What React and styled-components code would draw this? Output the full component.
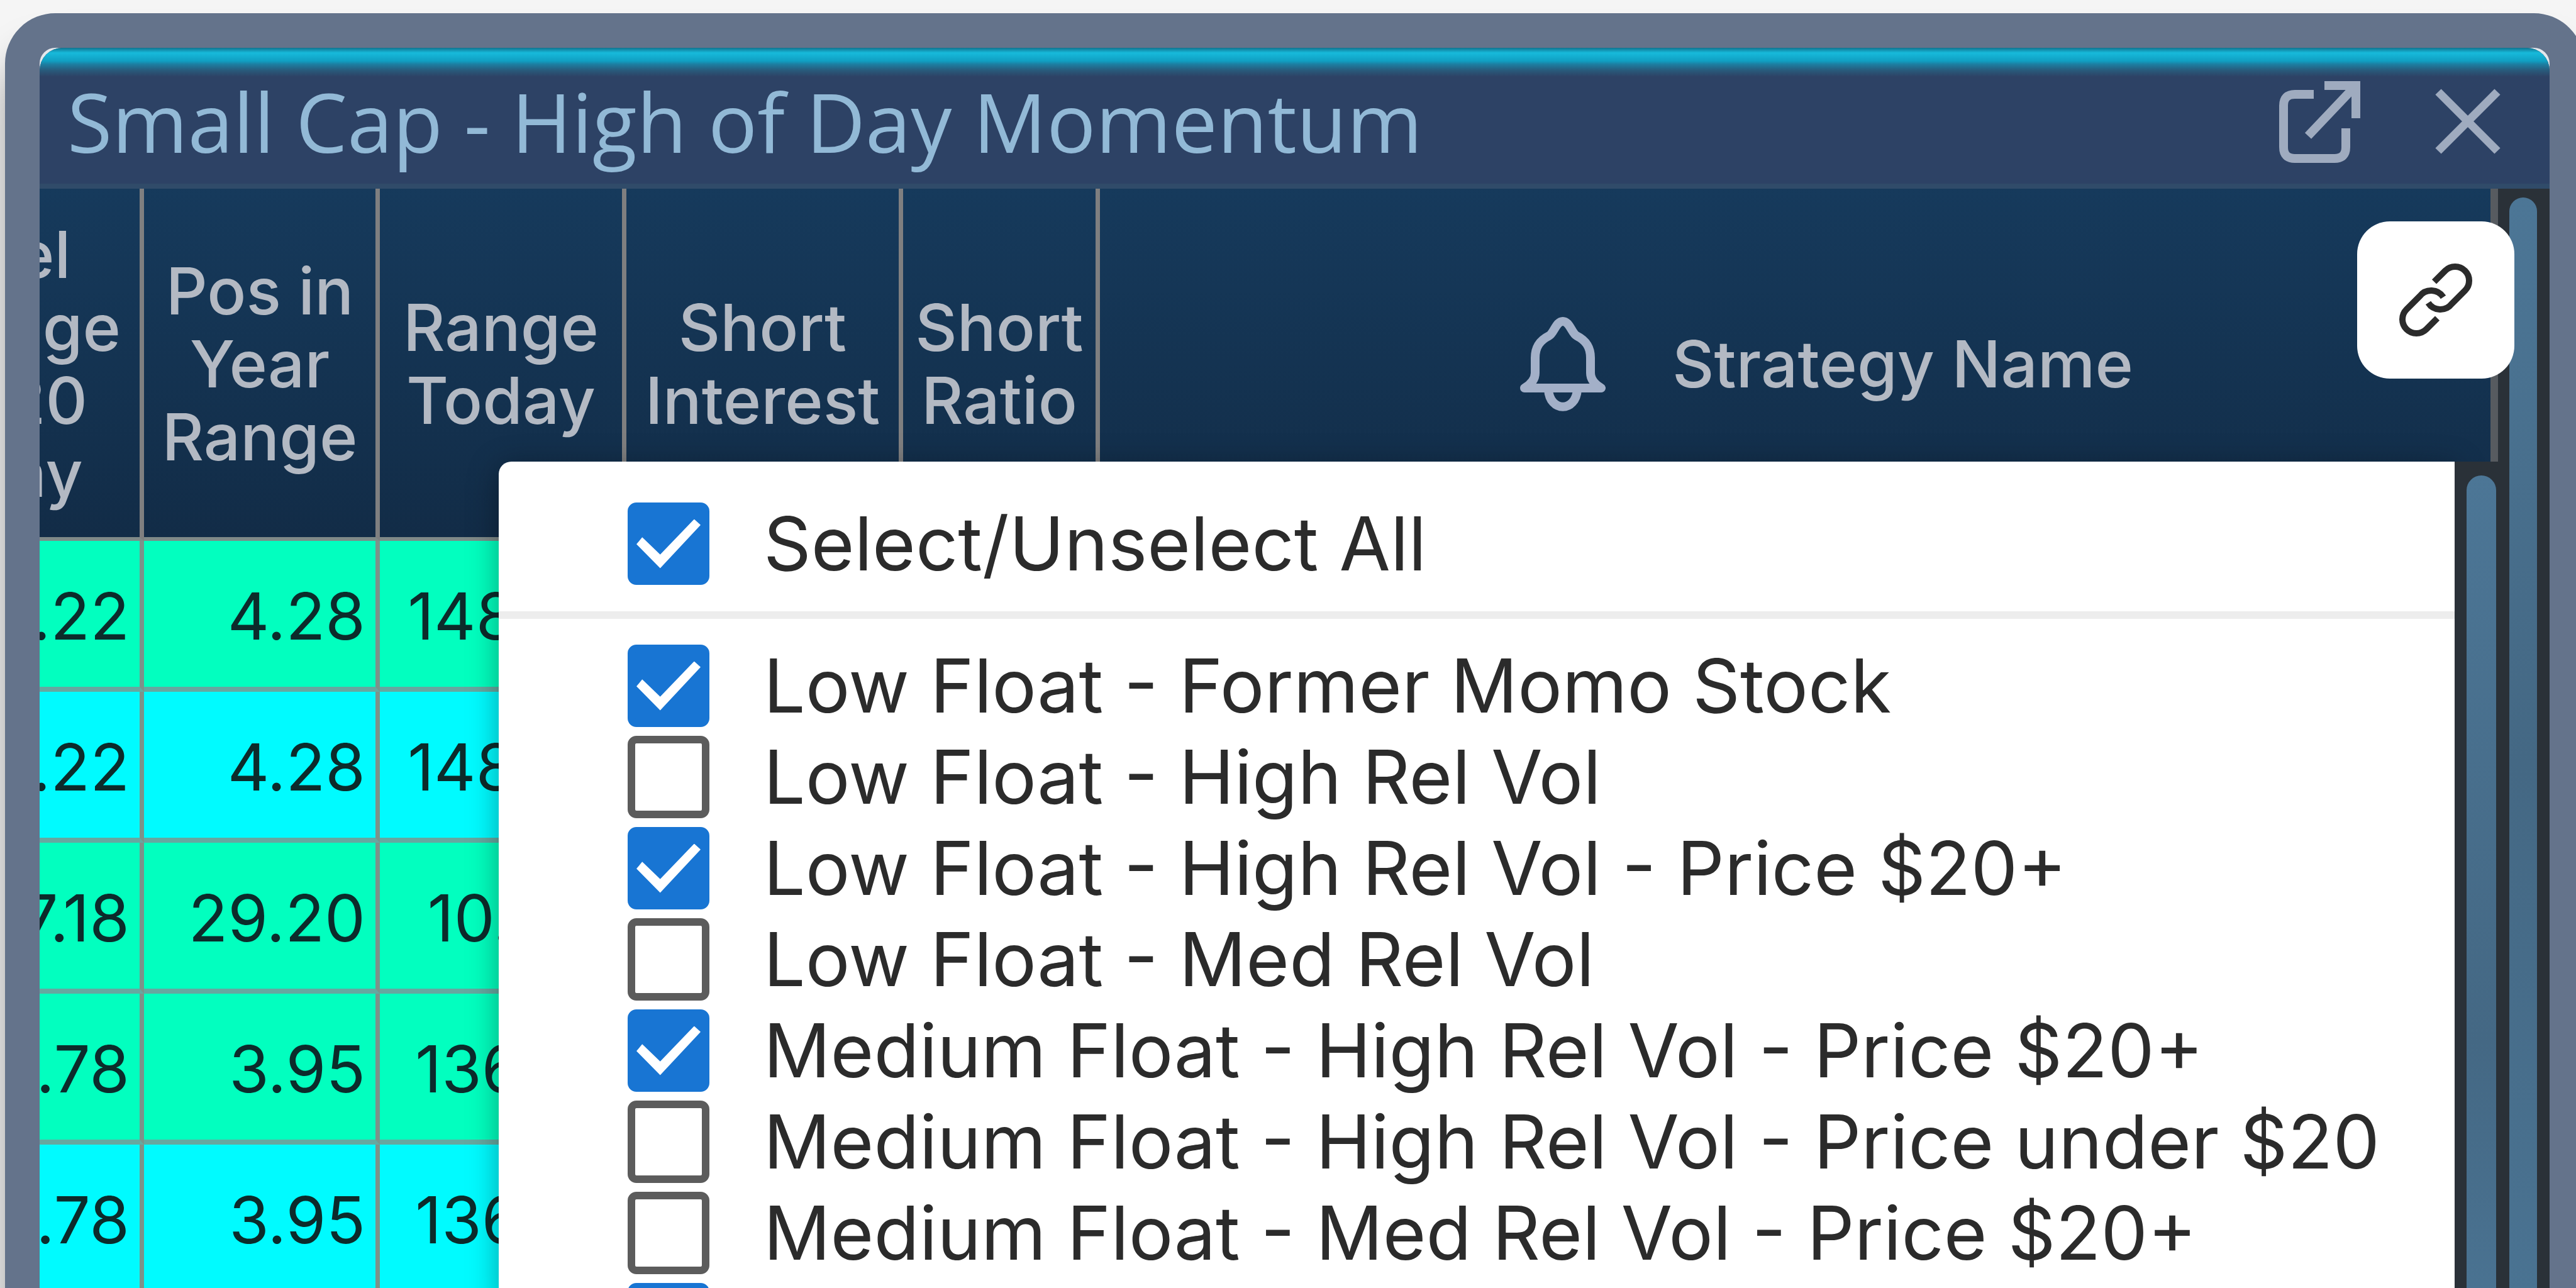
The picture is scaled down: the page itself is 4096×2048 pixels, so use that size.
import React, { useState } from "react";
import styled, { createGlobalStyle } from "styled-components";

const GlobalStyle = createGlobalStyle`
  * { box-sizing: border-box; }
  body {
    margin: 0;
    background: #f5f5f5;
    overflow: hidden;
  }
`;
const Frame = styled.div`
  height: 100vh;
  padding: 21px 0 0 8px;
  margin-right: -13px;
  display: flex;
  overflow: hidden;
`;
const Panel = styled.div`
  flex: 1;
  min-width: 0;
  height: calc(100% + 80px);
  border: 55px solid #64738b;
  border-radius: 80px;
  background: #e4e8ec;
  box-shadow: 0 60px 60px rgba(0, 0, 0, 0.35);
`;
const Widget = styled.section`
  position: relative;
  height: 100%;
  display: flex;
  flex-direction: column;
  border-radius: 36px 36px 0 0;
  overflow: hidden;
  background: #2d4265;
  font-family: Inter, "Liberation Sans", sans-serif;
`;
const TitleBar = styled.header`
  height: 224px;
  flex: none;
  display: flex;
  align-items: center;
  gap: 116px;
  padding: 18px 78px 0 44px;
  color: #9fabbf;
  background: linear-gradient(#11738f 0, #17badb 8px, #109fc2 21px, #1c7fa2 26px, #285a7b 36px, #2d4265 46px);
  border-bottom: 8px solid #304b69;
`;
const Title = styled.h1`
  flex: 1;
  margin: 0;
  font: 400 130px/160px "Open Sans", sans-serif;
  color: #92b9d6;
`;
const IconButton = styled.button`
  display: flex;
  padding: 0;
  border: 0;
  background: none;
  color: inherit;
`;
const Body = styled.div`
  flex: 1;
  min-height: 0;
  display: flex;
`;
const Scroller = styled.div`
  flex: 1;
  min-width: 0;
  overflow: hidden;
`;
const Table = styled.table`
  table-layout: fixed;
  width: calc(100% + 212px);
  margin-left: -212px;
  border-collapse: separate;
  border-spacing: 0;
`;
const Th = styled.th`
  height: 560px;
  padding: 4px 0 0;
  border-right: 7px solid #7f7f80;
  border-bottom: 6px solid #7f8a88;
  background: linear-gradient(#163a5c, #122c47);
  color: #b3b9c3;
  font-size: 103px;
  font-weight: 500;
  line-height: 116px;
  &:last-child {
    border-right: 12px solid #575b60;
  }
`;
const Td = styled.td`
  height: 240px;
  padding: 6px 16px 0;
  border-right: 7px solid #7b938a;
  border-bottom: 8px solid #66a8a0;
  background: ${p => (p.$tone === "green" ? "#02ffbf" : "#00fbff")};
  color: #0c2b2b;
  font-size: 103px;
  text-align: right;
`;
const Strategy = styled.div`
  display: flex;
  align-items: center;
  justify-content: center;
  gap: 106px;
  padding-left: 100px;
`;
const Track = styled.div`
  flex: none;
  width: 82px;
  padding: 14px 20px 0 18px;
  background: #2a3138;
`;
const Thumb = styled.div`
  height: 100%;
  border-radius: 24px 24px 0 0;
  background: linear-gradient(#4c7696, #446884 900px, #4a7392);
`;
const LinkButton = styled.button`
  position: absolute;
  top: 276px;
  right: 56px;
  width: 250px;
  height: 250px;
  display: flex;
  align-items: center;
  justify-content: center;
  border: 0;
  border-radius: 52px;
  background: #fff;
  color: #2b2b2b;
`;
const Popover = styled.div`
  position: absolute;
  top: 658px;
  right: 65px;
  bottom: 0;
  left: 730px;
  display: flex;
  border-radius: 20px 0 0 0;
  overflow: hidden;
`;
const PopoverShadow = styled(Popover)`
  overflow: visible;
  right: 150px;
  box-shadow: 0 10px 50px rgba(0, 0, 0, 0.35);
`;
const Menu = styled.div`
  flex: 1;
  background: #fff;
`;
const SelectAll = styled.div`
  padding: 58px 0 35px;
  border-bottom: 12px solid #ededed;
  margin-bottom: 34px;
`;
const Option = styled.label`
  display: flex;
  align-items: center;
  height: 145px;
  gap: 86px;
  padding-left: 205px;
  font-size: 118px;
  line-height: 145px;
  color: #2b2b2b;
  white-space: nowrap;
`;
const Check = styled.input`
  appearance: none;
  flex: none;
  width: 130px;
  height: 131px;
  margin: 0;
  border: 12px solid #5c5c5c;
  border-radius: 14px;
  background: #fff;
  display: grid;
  place-content: center;
  &:checked {
    border-color: #1875d3;
    background: #1875d3;
  }
  &:checked::before {
    content: "";
    width: 102px;
    height: 78px;
    background: #fff;
    clip-path: polygon(0 51%, 9% 37%, 37% 72%, 90% 0, 100% 12%, 37% 100%);
  }
`;
const MenuTrack = styled(Track)`
  width: 86px;
  padding: 22px 20px 0 19px;
`;

const ROWS = [
  { tone: "green", cells: [".22", "4.28", "148.86"] },
  { tone: "cyan", cells: [".22", "4.28", "148.86"] },
  { tone: "green", cells: ["7.18", "29.20", "10.135"] },
  { tone: "green", cells: [".78", "3.95", "136.77"] },
  { tone: "cyan", cells: [".78", "3.95", "136.77"] }
];

const STRATEGIES = [
  { name: "Low Float - Former Momo Stock", on: true },
  { name: "Low Float - High Rel Vol", on: false },
  { name: "Low Float - High Rel Vol - Price $20+", on: true },
  { name: "Low Float - Med Rel Vol", on: false },
  { name: "Medium Float - High Rel Vol - Price $20+", on: true },
  { name: "Medium Float - High Rel Vol - Price under $20", on: false },
  { name: "Medium Float - Med Rel Vol - Price $20+", on: false },
  { name: "", on: true }
];

const ExternalIcon = () => (
  <svg width="134" height="134" viewBox="0 0 134 134" fill="none" stroke="currentColor" strokeWidth="14">
    <path d="M57 24H27Q9 24 9 42V108Q9 126 27 126H90Q108 126 108 108V78" />
    <path d="M74 10H124V62M122 12L48 90" />
  </svg>
);
const CloseIcon = () => (
  <svg width="104" height="106" viewBox="0 0 104 106" fill="none" stroke="currentColor" strokeWidth="13">
    <path d="M5 6L99 100M99 6L5 100" />
  </svg>
);
const BellIcon = () => (
  <svg width="136" height="152" viewBox="0 0 136 152" fill="none" stroke="#a3b0c8" strokeWidth="14" strokeLinejoin="round">
    <path d="M7 114Q24 104 24 90V66C24 48 32 38 46 31C54 27 57 8 68 8C79 8 82 27 90 31C104 38 112 48 112 66V90Q112 104 129 114Z" />
    <path d="M45 116C47 153 89 153 91 116" />
  </svg>
);
const LinkIcon = () => (
  <svg width="120" height="120" viewBox="0 0 24 24" fill="none" stroke="currentColor" strokeWidth="2">
    <path d="M11.5 6.2L15 2.7A4.4 4.4 0 0 1 21.3 9L17.1 13.2A4.6 4.6 0 0 1 9.6 12.9" />
    <path d="M12.5 17.8L9 21.3A4.4 4.4 0 0 1 2.7 15L6.9 10.8A4.6 4.6 0 0 1 14.4 11.1" />
  </svg>
);

function App() {
  const [items, setItems] = useState(STRATEGIES);
  const [all, setAll] = useState(true);

  const toggle = index =>
    setItems(items.map((item, i) => (i === index ? { ...item, on: !item.on } : item)));
  const toggleAll = () => {
    setItems(items.map(item => ({ ...item, on: !all })));
    setAll(!all);
  };

  return (
    <Frame>
      <GlobalStyle />
      <Panel>
        <Widget>
          <TitleBar>
            <Title>Small Cap - High of Day Momentum</Title>
            <IconButton aria-label="Open in new window"><ExternalIcon /></IconButton>
            <IconButton aria-label="Close"><CloseIcon /></IconButton>
          </TitleBar>
          <Body>
            <Scroller>
              <Table>
                <colgroup>
                  <col style={{ width: 378 }} />
                  <col style={{ width: 375 }} />
                  <col style={{ width: 392 }} />
                  <col style={{ width: 440 }} />
                  <col style={{ width: 313 }} />
                  <col />
                </colgroup>
                <thead>
                  <tr>
                    <Th>Rel<br />Range<br />- 20<br />Day</Th>
                    <Th>Pos in<br />Year<br />Range</Th>
                    <Th>Range<br />Today</Th>
                    <Th>Short<br />Interest</Th>
                    <Th>Short<br />Ratio</Th>
                    <Th><Strategy><BellIcon />Strategy Name</Strategy></Th>
                  </tr>
                </thead>
                <tbody>
                  {ROWS.map((row, key) => (
                    <tr key={key}>
                      {row.cells.map((cell, i) => (
                        <Td key={i} $tone={row.tone}>{cell}</Td>
                      ))}
                      <Td $tone={row.tone} />
                      <Td $tone={row.tone} />
                      <Td $tone={row.tone} />
                    </tr>
                  ))}
                </tbody>
              </Table>
            </Scroller>
            <Track><Thumb /></Track>
          </Body>
          <PopoverShadow />
          <Popover>
            <Menu>
              <SelectAll>
                <Option>
                  <Check type="checkbox" checked={all} onChange={toggleAll} />
                  Select/Unselect All
                </Option>
              </SelectAll>
              {items.map((item, index) => (
                <Option key={index}>
                  <Check type="checkbox" checked={item.on} onChange={() => toggle(index)} />
                  {item.name}
                </Option>
              ))}
            </Menu>
            <MenuTrack><Thumb /></MenuTrack>
          </Popover>
          <LinkButton aria-label="Link"><LinkIcon /></LinkButton>
        </Widget>
      </Panel>
    </Frame>
  );
}

export default App;
